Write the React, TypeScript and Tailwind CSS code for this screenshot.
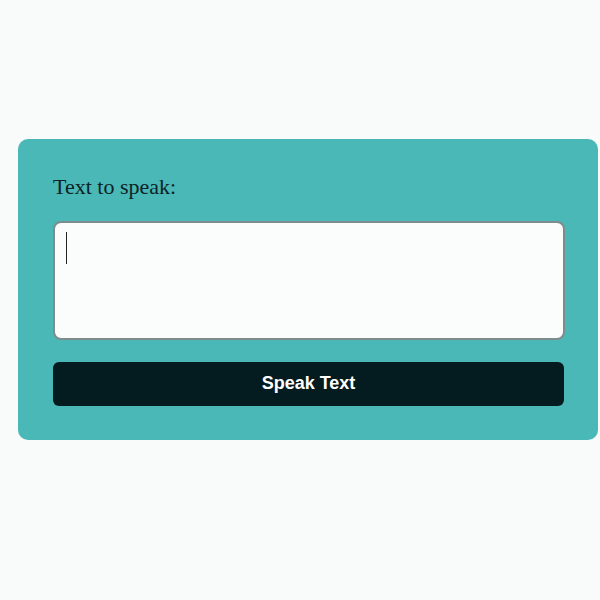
export default function App() {
  return (
    <div className="min-h-[600px] w-[600px] bg-[#f8fbfa] pt-[139px]">
      <div className="ml-[18px] w-[580px] rounded-[10px] bg-[#4ab8b6] pb-[34px] pl-[35px] pr-[33px] pt-[35px]">
        <label
          className="block text-[22px] leading-[25px] text-[#0d2326]"
          style={{ fontFamily: '"Liberation Serif", "Times New Roman", serif' }}
        >
          Text to speak:
        </label>
        <div className="mt-[22px] h-[119px] w-[512px] rounded-[8px] border-2 border-[#7f8c8c] bg-[#fbfcfc] pl-[11px] pt-[9px]">
          <div className="h-[32px] w-px bg-[#222]" />
        </div>
        <button
          className="mt-[22px] flex h-[44px] w-[511px] items-center justify-center rounded-[6px] bg-[#041b20] pb-[2px] text-[18px] font-bold text-white"
          style={{ fontFamily: '"Liberation Sans", Arial, sans-serif' }}
        >
          Speak Text
        </button>
      </div>
    </div>
  );
}
